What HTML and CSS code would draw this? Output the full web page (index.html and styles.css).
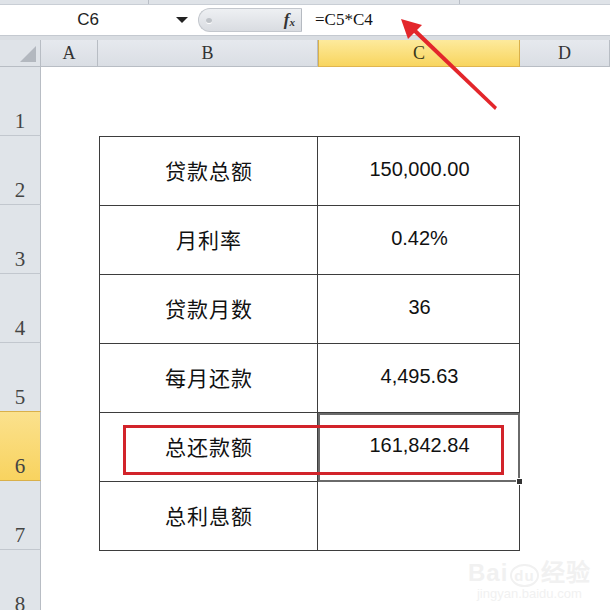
FILE: index.html
```html
<!DOCTYPE html>
<html lang="zh-CN">
<head>
    <meta charset="UTF-8">
    <title>贷款计算 - Excel</title>
    <link rel="stylesheet" href="styles.css">
</head>
<body>
    <div class="topstrip">
        <div class="ts-a"></div>
        <div class="ts-b"></div>
        <div class="ts-c"></div>
    </div>
    <div class="formula-bar">
        <div class="namebox">
            <span class="name">C6</span>
            <span class="drop"></span>
        </div>
        <div class="pill">
            <span class="dimple"></span>
            <span class="fx"><i>f</i><sub>x</sub></span>
        </div>
        <div class="formula">=C5*C4</div>
    </div>
    <div class="sep"></div>

    <div class="sheet">
        <div class="corner"></div>
        <div class="colhead">A</div>
        <div class="colhead">B</div>
        <div class="colhead active">C</div>
        <div class="colhead">D</div>

        <div class="rowhead r1">1</div>
        <div class="rowhead r2">2</div>
        <div class="rowhead r3">3</div>
        <div class="rowhead r4">4</div>
        <div class="rowhead r5">5</div>
        <div class="rowhead r6 active">6</div>
        <div class="rowhead r7">7</div>
        <div class="rowhead r8">8</div>

        <table class="loan">
            <tr><td class="label">贷款总额</td><td class="num">150,000.00</td></tr>
            <tr><td class="label">月利率</td><td class="num">0.42%</td></tr>
            <tr><td class="label">贷款月数</td><td class="num">36</td></tr>
            <tr><td class="label">每月还款</td><td class="num">4,495.63</td></tr>
            <tr><td class="label">总还款额</td><td class="num selected">161,842.84</td></tr>
            <tr><td class="label">总利息额</td><td class="num"></td></tr>
        </table>

        <div class="redbox"></div>
    </div>

    <svg class="arrow" width="610" height="610" viewBox="0 0 610 610">
        <path d="M497 107 L495 110 L412 31 L415 28 Z" fill="#e3262b"/>
        <polygon points="401,19 422,25 408,39" fill="#e3262b"/>
    </svg>

    <div class="watermark">
        <div class="wm-logo">Bai<span class="paw">du</span>经验</div>
        <div class="wm-url">jingyan.baidu.com</div>
    </div>
</body>
</html>
```

FILE: styles.css
```css
body {
    margin: 0;
    width: 610px;
    height: 610px;
    overflow: hidden;
    background: #ffffff;
    position: relative;
    font-family: "Liberation Sans", Arial, sans-serif;
}

/* ribbon remnant at the very top */
.topstrip {
    height: 4px;
    display: flex;
    background: #dfe3e8;
    border-bottom: 1px solid #c9ced5;
}
.ts-a { width: 148px; border-right: 1px solid #b9bec6; }
.ts-b { width: 310px; border-right: 1px solid #b9bec6; }
.ts-c { flex: 1; }

/* name box + formula */
.formula-bar {
    height: 30px;
    display: flex;
    align-items: center;
    background: #ffffff;
}
.namebox {
    width: 196px;
    height: 100%;
    display: flex;
    align-items: center;
}
.name {
    flex: 1;
    text-align: center;
    font-family: "Liberation Sans", Arial, sans-serif;
    font-size: 17px;
    color: #222;
}
.drop {
    width: 0;
    height: 0;
    border-left: 6px solid transparent;
    border-right: 6px solid transparent;
    border-top: 6px solid #222;
    margin-right: 8px;
}
.pill {
    width: 104px;
    height: 24px;
    margin-left: 2px;
    border-radius: 13px 0 0 13px;
    background: linear-gradient(#eef0f3, #d9dce1);
    border: 1px solid #c3c7cd;
    border-right: 1px solid #b5bac1;
    display: flex;
    align-items: center;
    justify-content: space-between;
    box-sizing: border-box;
    padding: 0 6px 0 7px;
}
.dimple {
    width: 6px;
    height: 5px;
    border-radius: 50%;
    background: #bfc3c8;
    box-shadow: 0 1px 0 #ffffff;
}
.fx {
    font-family: "Liberation Serif", serif;
    font-weight: bold;
    font-size: 17px;
    color: #333;
}
.fx sub {
    font-size: 11px;
    font-style: italic;
    vertical-align: -1px;
}
.formula {
    padding-left: 13px;
    font-family: "Liberation Serif", serif;
    font-size: 17px;
    color: #111;
}

.sep {
    height: 4px;
    background: #d9dde2;
    border-top: 1px solid #c4c9d0;
}

/* worksheet */
.sheet {
    position: relative;
    display: grid;
    grid-template-columns: 41px 57px 220px 202px 90px;
    grid-template-rows: 27px repeat(8, 69px);
}
.corner {
    grid-column: 1;
    grid-row: 1;
    background: #dfe3e8;
    border-right: 1px solid #b8bdc4;
    border-bottom: 1px solid #b8bdc4;
    position: relative;
}
.corner::after {
    content: "";
    position: absolute;
    right: 4px;
    bottom: 4px;
    border-left: 16px solid transparent;
    border-bottom: 16px solid #b3b8bf;
}
.colhead {
    grid-row: 1;
    background: linear-gradient(#e6e9ee, #dadee4);
    border-right: 1px solid #b8bdc4;
    border-bottom: 1px solid #b8bdc4;
    display: flex;
    align-items: center;
    justify-content: center;
    font-family: "Liberation Serif", serif;
    font-size: 18px;
    color: #333;
}
.colhead.active {
    background: linear-gradient(#fdea9c, #f8d55f);
    border-left: 1px solid #d9b04a;
    border-right: 1px solid #d9b04a;
    border-bottom: 1px solid #e0b54f;
    color: #3a3a1a;
}
.rowhead {
    grid-column: 1;
    background: #e0e4e9;
    border-right: 1px solid #b8bdc4;
    border-bottom: 1px solid #c2c7ce;
    display: flex;
    align-items: flex-end;
    justify-content: center;
    padding-bottom: 1px;
    font-family: "Liberation Serif", serif;
    font-size: 21px;
    color: #444;
}
.r1 { grid-row: 2; }
.r2 { grid-row: 3; }
.r3 { grid-row: 4; }
.r4 { grid-row: 5; }
.r5 { grid-row: 6; }
.r6 { grid-row: 7; }
.r7 { grid-row: 8; }
.r8 { grid-row: 9; }
.rowhead.active {
    background: linear-gradient(#fbe18d, #f8d35f);
    border-top: 1px solid #d9b04a;
    border-bottom: 1px solid #d9b04a;
    margin-top: -1px;
}

/* the data table sits on B2:C7 */
.loan {
    grid-column: 3 / 5;
    grid-row: 3 / 9;
    align-self: start;
    border-collapse: collapse;
    width: 421px;
    margin-left: 1px;
}
.loan td {
    border: 1px solid #3d3d3d;
    height: 65px;
    padding: 0 0 3px;
    text-align: center;
    color: #111;
}
.loan .label {
    width: 217px;
    font-family: "Noto Sans CJK SC", "Noto Sans", sans-serif;
    font-size: 21px;
    letter-spacing: 1px;
    text-indent: 1px;
}
.loan .num {
    font-family: "Liberation Sans", Arial, sans-serif;
    font-size: 20px;
    padding-left: 2px;
}
.loan .selected {
    position: relative;
    outline: 2px solid #6a6a6a;
    outline-offset: -2px;
}
.loan .selected::after {
    content: "";
    position: absolute;
    right: -4px;
    bottom: -4px;
    width: 5px;
    height: 5px;
    background: #333;
    border: 1px solid #fff;
}

/* annotation */
.redbox {
    position: absolute;
    left: 123px;
    top: 385px;
    width: 381px;
    height: 50px;
    box-sizing: border-box;
    border: 3px solid #d2232a;
}
.arrow {
    position: absolute;
    left: 0;
    top: 0;
    pointer-events: none;
}

.watermark {
    position: absolute;
    left: 468px;
    top: 553px;
    color: #f1f1f1;
    text-align: center;
}
.wm-logo {
    font-family: "Liberation Sans", Arial, sans-serif;
    font-weight: bold;
    font-size: 24px;
    letter-spacing: 1px;
}
.paw {
    font-size: 15px;
    display: inline-block;
    border: 2px solid #f1f1f1;
    border-radius: 50%;
    padding: 1px 2px;
    margin: 0 2px;
}
.wm-url {
    font-size: 13px;
    margin-top: -2px;
}
```
